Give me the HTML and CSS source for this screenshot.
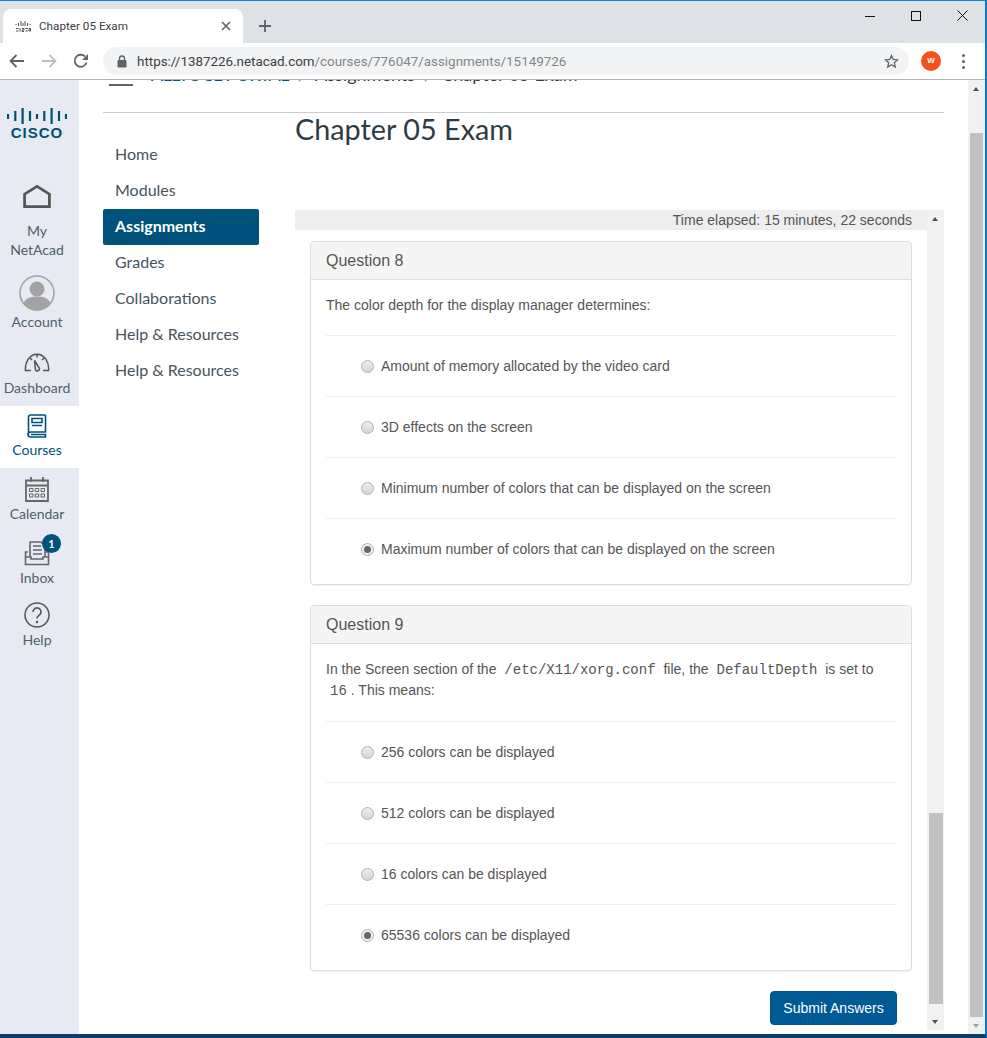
FILE: index.html
```html
<!DOCTYPE html>
<html>
<head>
<meta name="viewport" content="width=device-width, initial-scale=1.0">
<title>Chapter 05 Exam</title>
<link rel="stylesheet" href="styles.css">
</head>
<body>

<div class="window">

  <div class="tabstrip">
    <div class="tab">
      <svg class="favicon" width="16" height="11" viewBox="0 0 16 11">
        <path d="M1 3v1M3.500 2v3M6 0v5M8 2v3M10 0v5M12.500 2v3M15 3v1" stroke="#555" stroke-width="1" fill="none"/>
        <path d="M1 7.500h2.500M1 10h2.500M5 7v3.500M7 7.500H9V9H7v1.500h2M10.500 7.500h2.500M10.500 10h2.500M14 7.500h1.500v2.500H14z" stroke="#555" stroke-width="1" fill="none"/>
      </svg>
      <span class="tab-title">Chapter 05 Exam</span>
      <svg class="tab-close" width="10" height="10" viewBox="0 0 10 10">
        <path d="M1 1l8 8M9 1l-8 8" stroke="#5f6368" stroke-width="1.600" fill="none"/>
      </svg>
    </div>
    <svg class="new-tab" width="12" height="12" viewBox="0 0 12 12">
      <path d="M6 0v12M0 6h12" stroke="#5f6368" stroke-width="1.800" fill="none"/>
    </svg>
    <div class="window-btns">
      <svg width="10" height="10" viewBox="0 0 10 10"><path d="M0 5.500h10" stroke="#111" fill="none"/></svg>
      <svg width="10" height="10" viewBox="0 0 10 10"><rect x="0.500" y="0.500" width="9" height="9" stroke="#111" fill="none"/></svg>
      <svg width="11" height="11" viewBox="0 0 11 11"><path d="M0.500 0.500l10 10M10.500 0.500l-10 10" stroke="#111" fill="none"/></svg>
    </div>
  </div>

  <div class="toolbar">
    <svg class="tool-icon" width="16" height="14" viewBox="0 0 16 14"><path d="M15 7H2M7.500 1L1.500 7l6 6" stroke="#5f6368" stroke-width="1.800" fill="none"/></svg>
    <svg class="tool-icon" width="16" height="14" viewBox="0 0 16 14"><path d="M1 7h13M8.500 1l6 6-6 6" stroke="#bdc1c6" stroke-width="1.800" fill="none"/></svg>
    <svg class="tool-icon" width="16" height="16" viewBox="0 0 16 16"><path d="M13.500 9.500A6 6 0 1 1 12 3.500" stroke="#5f6368" stroke-width="1.800" fill="none"/><path d="M15 1v6H9z" fill="#5f6368"/></svg>
    <div class="omnibox">
      <svg width="10" height="13" viewBox="0 0 10 13"><path d="M2.500 5V3.500a2.500 2.500 0 0 1 5 0V5" stroke="#5f6368" stroke-width="1.300" fill="none"/><rect x="0.500" y="5" width="9" height="7.500" rx="1" fill="#5f6368"/></svg>
      <span class="url"><b>https://1387226.netacad.com</b>/courses/776047/assignments/15149726</span>
      <svg class="star" width="15" height="15" viewBox="0 0 15 15"><path d="M7.500 1.500l1.800 4 4.300.4-3.300 2.900 1 4.300-3.800-2.300-3.800 2.300 1-4.300L1.400 5.900l4.300-.4z" stroke="#5f6368" stroke-width="1.300" fill="none"/></svg>
    </div>
    <div class="avatar">W</div>
    <div class="dots"><i></i><i></i><i></i></div>
  </div>

  <div class="page">
    <div class="global-nav">
      <svg class="cisco" width="60" height="33" viewBox="0 0 60 33">
        <path d="M1 7v5M8.300 4v10M15.600 1v16M23 4v10M30 7v5M37.300 4v10M44.600 1v16M52 4v10M59 7v5" stroke="#005073" stroke-width="2.200" fill="none"/>
        <text x="30" y="31" class="cisco-word">CISCO</text>
      </svg>

      <a class="gnav-item gnav-home">
        <svg width="28" height="23" viewBox="0 0 30 25"><path d="M1.500 23.500V10L15 1.500 28.500 10v13.500z" stroke="#555" stroke-width="3" fill="none"/></svg>
        <span>My<br>NetAcad</span>
      </a>
      <a class="gnav-item gnav-account">
        <svg width="36" height="36" viewBox="0 0 36 36"><circle cx="18" cy="18" r="17" fill="#e7eaf2" stroke="#a3a3a3" stroke-width="1.600"/><circle cx="18" cy="14" r="7.500" fill="#a3a3a3"/><path d="M4.500 28c3-6 9-6.500 13.500-6.500S28.500 22 31.500 28a16 16 0 0 1-27 0z" fill="#a3a3a3"/></svg>
        <span>Account</span>
      </a>
      <a class="gnav-item gnav-dash">
        <svg width="26" height="19" viewBox="0 0 26 19"><path d="M7 17.500H1.500C.5 9 6 1.200 13 1.200S25.500 9 24.500 17.500H19M6 5l2 2M13 1.500v3M20 5l-2 2M10.500 7.500l5 8a2.200 2.200 0 0 1-4 1.500z" stroke="#555" stroke-width="1.500" fill="none"/></svg>
        <span>Dashboard</span>
      </a>
      <a class="gnav-item gnav-courses">
        <svg width="20" height="24" viewBox="0 0 20 24"><path d="M18.500 1H3.500A2 2 0 0 0 1.500 3v17.500M18.500 1v17H3.500a2 2 0 0 0 0 5h15v-2.500H4" stroke="#00527c" stroke-width="1.600" fill="#fff"/><path d="M5 4.500h10v4H5zM5 11.500h10" stroke="#00527c" stroke-width="1.600" fill="none"/></svg>
        <span>Courses</span>
      </a>
      <a class="gnav-item gnav-calendar">
        <svg width="24" height="26" viewBox="0 0 24 26"><path d="M1 4.500h22v20.500H1zM1 9.500h22M6 1v5M18 1v5" stroke="#666" stroke-width="1.800" fill="none"/><path d="M4.500 12.500h3.500v3H4.500zM10.200 12.500h3.500v3h-3.500zM16 12.500h3.500v3H16zM4.500 18h3.500v3H4.500zM10.200 18h3.500v3h-3.500zM16 18h3.500v3H16z" stroke="#666" fill="none"/></svg>
        <span>Calendar</span>
      </a>
      <a class="gnav-item gnav-inbox">
        <svg width="26" height="26" viewBox="0 0 26 26"><path d="M6 17V2h11l4 4v11M9 6h8M9 10h9M9 14h9" stroke="#666" stroke-width="1.600" fill="none"/><path d="M4 12H1.500v12.500h23V12H22M1.500 17H7v2h12v-2h5.500" stroke="#666" stroke-width="1.600" fill="none"/></svg>
        <b class="badge">1</b>
        <span>Inbox</span>
      </a>
      <a class="gnav-item gnav-help">
        <svg width="26" height="26" viewBox="0 0 26 26"><circle cx="13" cy="13" r="12" stroke="#555" stroke-width="1.500" fill="none"/><path d="M9 10a4 4 0 1 1 6.500 3c-1.500 1.200-2.500 1.700-2.500 3.500" stroke="#555" stroke-width="1.600" fill="none"/><circle cx="13" cy="20" r="1.200" fill="#555"/></svg>
        <span>Help</span>
      </a>
    </div>

    <div class="main">
      <div class="crumbs">
        <span class="burger"></span>
        <a>ALLTOCL PORTAL</a><i>/</i><a>Assignments</a><i>/</i><a>Chapter 05 Exam</a>
      </div>

      <div class="columns">
        <ul class="course-nav">
          <li>Home</li>
          <li>Modules</li>
          <li class="active">Assignments</li>
          <li>Grades</li>
          <li>Collaborations</li>
          <li>Help &amp; Resources</li>
          <li>Help &amp; Resources</li>
        </ul>

        <div class="content">
          <h1>Chapter 05 Exam</h1>

          <div class="quiz-frame">
            <div class="quiz-scroll">
              <div class="timer">Time elapsed: 15 minutes, 22 seconds</div>

              <div class="card">
                <div class="card-head">Question 8</div>
                <div class="card-body">
                  <p class="question">The color depth for the display manager determines:</p>
                  <label class="option"><span class="radio"></span>Amount of memory allocated by the video card</label>
                  <label class="option"><span class="radio"></span>3D effects on the screen</label>
                  <label class="option"><span class="radio"></span>Minimum number of colors that can be displayed on the screen</label>
                  <label class="option"><span class="radio checked"></span>Maximum number of colors that can be displayed on the screen</label>
                </div>
              </div>

              <div class="card">
                <div class="card-head">Question 9</div>
                <div class="card-body">
                  <p class="question two-lines">In the Screen section of the <code>/etc/X11/xorg.conf</code> file, the <code>DefaultDepth</code> is set to <code>16</code>. This means:</p>
                  <label class="option"><span class="radio"></span>256 colors can be displayed</label>
                  <label class="option"><span class="radio"></span>512 colors can be displayed</label>
                  <label class="option"><span class="radio"></span>16 colors can be displayed</label>
                  <label class="option"><span class="radio checked"></span>65536 colors can be displayed</label>
                </div>
              </div>

              <div class="actions"><button class="submit">Submit Answers</button></div>
            </div>

            <div class="scrollbar inner-bar">
              <span class="arrow-up"></span>
              <div class="track"><div class="thumb"></div></div>
              <span class="arrow-down"></span>
            </div>
          </div>
        </div>
      </div>
    </div>

    <div class="scrollbar page-bar">
      <span class="arrow-up"></span>
      <div class="track"><div class="thumb"></div></div>
      <span class="arrow-down dim"></span>
    </div>
  </div>

</div>

</body>
</html>
```

FILE: styles.css
```css
* {
  box-sizing: border-box;
}

html, body {
  margin: 0;
  height: 100%;
  overflow: hidden;
}

body {
  font: 14px "Liberation Sans", Arial, sans-serif;
  color: #555;
  background: #fff;
}

.window {
  height: 1038px;
  display: flex;
  flex-direction: column;
  border-top: 1px solid #0a84d8;
  border-right: 2px solid #0a78c8;
  border-bottom: 4px solid #063f6e;
}

/* browser chrome */
.tabstrip {
  height: 42px;
  flex: none;
  display: flex;
  align-items: flex-end;
  background: #dee1e6;
  position: relative;
}

.tab {
  width: 240px;
  height: 34px;
  margin-left: 3px;
  padding: 0 12px;
  display: flex;
  align-items: center;
  background: #fff;
  border-radius: 8px 8px 0 0;
}

.favicon {
  margin-right: 8px;
}

.tab-title {
  flex: 1;
  font: 11.700px Roboto, sans-serif;
  color: #3c4043;
}

.new-tab {
  margin: 0 0 11px 16px;
}

.window-btns {
  position: absolute;
  top: 9px;
  right: 17px;
  display: flex;
  align-items: center;
  gap: 36px;
}

.toolbar {
  height: 37px;
  flex: none;
  display: flex;
  align-items: center;
  background: #fff;
  border-bottom: 1px solid #b4b4b4;
  padding-left: 9px;
}

.tool-icon {
  margin-right: 16px;
}

.omnibox {
  width: 806px;
  height: 28px;
  margin-left: -2px;
  padding: 0 10px 0 14px;
  display: flex;
  align-items: center;
  background: #f1f3f4;
  border-radius: 14px;
}

.url {
  flex: 1;
  margin-left: 10px;
  font: 13.400px Roboto, sans-serif;
  color: #80868b;
}

.url b {
  font-weight: normal;
  color: #3c4043;
}

.avatar {
  width: 20px;
  height: 20px;
  margin-left: 12px;
  border-radius: 50%;
  background: #f4511e;
  color: #fff;
  font: bold 8px/20px "Liberation Sans", sans-serif;
  text-align: center;
}

.dots {
  margin-left: 21px;
  display: flex;
  flex-direction: column;
  gap: 3px;
}

.dots i {
  width: 3px;
  height: 3px;
  border-radius: 50%;
  background: #5f6368;
}

/* the page */
.page {
  flex: 1;
  display: flex;
  min-height: 0;
  overflow: hidden;
}

.global-nav {
  width: 79px;
  flex: none;
  padding-top: 27px;
  background: #e7eaf2;
  font: 14px/19px Lato, sans-serif;
  color: #4f5f6b;
}

.cisco {
  display: block;
  margin: 0 0 45px 7px;
}

.cisco-word {
  font: bold 15px "Liberation Sans", sans-serif;
  letter-spacing: 1px;
  fill: #005073;
  text-anchor: middle;
}

.gnav-item {
  position: relative;
  display: flex;
  flex-direction: column;
  align-items: center;
  text-align: center;
  padding-right: 5px;
}

.gnav-home span { margin-top: 13px; }
.gnav-account { margin-top: 16px; }
.gnav-account span { margin-top: 1px; }
.gnav-dash { margin-top: 22px; }
.gnav-dash span { margin-top: 6px; }
.gnav-courses {
  height: 62px;
  margin-top: 9px;
  padding-top: 8px;
  background: #fff;
  color: #00527c;
}
.gnav-courses span { margin-top: 2px; }
.gnav-calendar { margin-top: 8px; }
.gnav-calendar span { margin-top: 2px; }
.gnav-inbox { margin-top: 17px; }
.gnav-inbox span { margin-top: 2px; }
.gnav-help { margin-top: 15px; }
.gnav-help span { margin-top: 2px; }

.badge {
  position: absolute;
  top: -6px;
  left: 42px;
  width: 19px;
  height: 19px;
  border-radius: 50%;
  background: #00527c;
  color: #fff;
  font: bold 11px/19px Lato, sans-serif;
}

.main {
  flex: 1;
  min-width: 0;
  padding: 0 24px;
}

/* the breadcrumb is scrolled almost out of sight */
.crumbs {
  height: 53px;
  margin-top: -20px;
  padding: 3px 0 0 5px;
  display: flex;
  align-items: flex-start;
  gap: 9px;
  border-bottom: 1px solid #c7cdd1;
  font: 18px/22px Lato, sans-serif;
  color: #2d3b45;
  position: relative;
}

.crumbs a:first-of-type {
  color: #00527c;
  margin-left: 43px;
  letter-spacing: -.55px;
}

.crumbs i {
  font-style: normal;
  color: #888;
}

.burger {
  position: absolute;
  left: 6px;
  top: 24px;
  width: 24px;
  height: 2px;
  background: #5a6670;
}

.columns {
  display: flex;
}

.course-nav {
  width: 156px;
  flex: none;
  margin: 24px 36px 0 0;
  padding: 0;
  list-style: none;
  font: 16px/34px Lato, sans-serif;
  color: #48545d;
}

.course-nav li {
  height: 36px;
  padding-left: 12px;
}

.course-nav .active {
  background: #00527c;
  color: #fff;
  font-weight: bold;
  border-radius: 2px;
}

.content {
  flex: 1;
  min-width: 0;
}

h1 {
  height: 99px;
  margin: -2px 0 0;
  font: 28.800px/36px Lato, sans-serif;
  color: #2d3b45;
}

.quiz-frame {
  height: 820px;
  display: flex;
}

.quiz-scroll {
  flex: 1;
  min-width: 0;
}

.timer {
  height: 20px;
  padding-right: 15px;
  background: #eee;
  text-align: right;
  line-height: 20px;
}

.card {
  margin: 11px 15px 20px;
  border: 1px solid #ddd;
  border-radius: 4px;
  box-shadow: 0 1px 1px rgba(0,0,0,.05);
}

.card-head {
  height: 38px;
  padding-left: 15px;
  background: #f5f5f5;
  border-bottom: 1px solid #ddd;
  border-radius: 3px 3px 0 0;
  font-size: 16px;
  line-height: 37px;
}

.card-body {
  padding: 15px 15px 5px;
}

.question {
  margin: 0;
  padding-bottom: 19px;
  line-height: 21px;
}

.question.two-lines {
  padding-bottom: 20px;
}

code {
  margin: 0 4px;
  font: 14px "Liberation Mono", monospace;
}

.option {
  height: 61px;
  padding-left: 35px;
  display: flex;
  align-items: center;
  border-top: 1px solid #eee;
}

.radio {
  width: 13px;
  height: 13px;
  margin-right: 7px;
  border: 1px solid #b0b0b0;
  border-radius: 50%;
  background: linear-gradient(#eee, #d4d4d4);
  position: relative;
}

.radio.checked {
  background: #f0f0f0;
}

.radio.checked::after {
  content: "";
  position: absolute;
  left: 2px;
  top: 2px;
  width: 7px;
  height: 7px;
  border-radius: 50%;
  background: #666;
}

.actions {
  margin: 0 30px 0 0;
  display: flex;
  justify-content: flex-end;
}

.submit {
  width: 127px;
  height: 34px;
  padding: 0;
  background: #005a96;
  border: 1px solid #004f85;
  border-radius: 4px;
  color: #fff;
  font: 14px "Liberation Sans", sans-serif;
}

/* scrollbars */
.scrollbar {
  width: 17px;
  flex: none;
  display: flex;
  flex-direction: column;
  background: #f1f1f1;
}

.track {
  flex: 1;
  position: relative;
}

.thumb {
  position: absolute;
  left: 2px;
  right: 1px;
  background: #c1c1c1;
}

.inner-bar .thumb {
  top: 586px;
  height: 191px;
}

.page-bar .thumb {
  right: 2px;
  top: 36px;
  height: 884px;
}

.arrow-up, .arrow-down {
  height: 17px;
  flex: none;
  position: relative;
}

.arrow-up::after, .arrow-down::after {
  content: "";
  position: absolute;
  left: 5px;
  top: 7px;
  border-left: 3.500px solid transparent;
  border-right: 3.500px solid transparent;
}

.arrow-up::after {
  border-bottom: 4px solid #505050;
}

.arrow-down::after {
  border-top: 4px solid #505050;
}

.arrow-down.dim::after {
  border-top-color: #a3a3a3;
}
```
